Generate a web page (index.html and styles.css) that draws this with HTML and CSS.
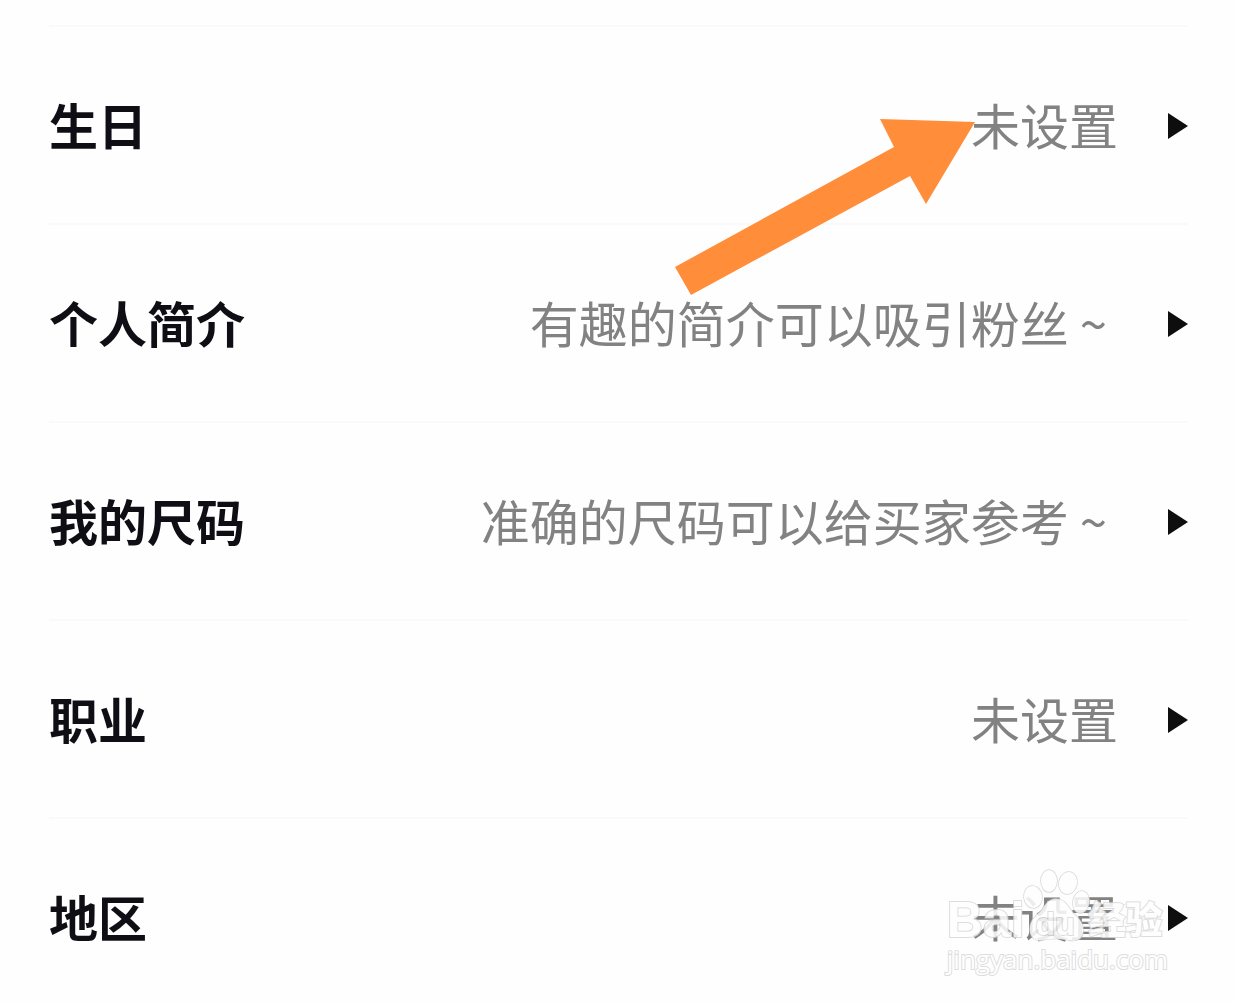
FILE: index.html
```html
<!DOCTYPE html>
<html lang="zh-CN">
<head>
  <meta charset="UTF-8">
  <meta name="viewport" content="width=device-width, initial-scale=1">
  <title>个人资料</title>
  <link rel="stylesheet" href="styles.css">
</head>
<body>
  <main class="page">
    <ul class="settings">
      <li><a class="row" href="#birthday">
        <span class="label">生日</span>
        <span class="value">未设置</span>
        <span class="caret"></span>
      </a></li>
      <li><a class="row" href="#intro">
        <span class="label">个人简介</span>
        <span class="value">有趣的简介可以吸引粉丝&nbsp;~&nbsp;</span>
        <span class="caret"></span>
      </a></li>
      <li><a class="row" href="#size">
        <span class="label">我的尺码</span>
        <span class="value">准确的尺码可以给买家参考&nbsp;~&nbsp;</span>
        <span class="caret"></span>
      </a></li>
      <li><a class="row" href="#job">
        <span class="label">职业</span>
        <span class="value">未设置</span>
        <span class="caret"></span>
      </a></li>
      <li><a class="row" href="#region">
        <span class="label">地区</span>
        <span class="value">未设置</span>
        <span class="caret"></span>
      </a></li>
    </ul>

    <svg class="pointer" viewBox="0 0 300 177" aria-hidden="true">
      <path d="M0 148 L219 28 L205 0 L300 3 L251 85 L235 57 L16 176 Z" fill="#ff8d3a"/>
    </svg>

    <div class="watermark">
      <div class="brand">
        <span class="latin">Bai</span>
        <div class="paw">
          <svg viewBox="0 0 64 76" aria-hidden="true">
            <g fill="#fff" stroke="#d0d0d0" stroke-width="1.5">
              <ellipse cx="8" cy="29" rx="9" ry="11" transform="rotate(-8 8 29)"/>
              <ellipse cx="24" cy="13" rx="8" ry="11"/>
              <ellipse cx="43" cy="15" rx="9" ry="11" transform="rotate(12 43 15)"/>
              <ellipse cx="56" cy="34" rx="8" ry="11" transform="rotate(10 56 34)"/>
              <path d="M31 31 C24 31 21 36 17 42 C12 48 5 51 5 61 C5 69 10 73 17 72 C26 70 35 70 44 72 C53 74 59 70 58 60 C57 51 49 48 45 41 C41 35 38 31 31 31 Z"/>
            </g>
          </svg>
          <span class="du">du</span>
        </div>
        <span class="hanzi">经验</span>
      </div>
      <div class="site">jingyan.baidu.com</div>
    </div>
  </main>
</body>
</html>
```
FILE: styles.css
```css
* { box-sizing: border-box; }

body {
  margin: 0;
  background: #fefefe;
  color: #0e0e14;
  font-family: "Noto Sans CJK SC", sans-serif;
}

.page {
  position: relative;
  padding: 25px 47px 0 49px;
}

.settings {
  list-style: none;
  margin: 0;
  padding: 0;
}

.row {
  display: flex;
  align-items: center;
  padding: 61px 0 59px;
  border-top: 2px solid #f9f9f9;
  font-size: 49px;
  line-height: 72px;
  color: inherit;
  text-decoration: none;
}

.label,
.value {
  padding-bottom: 4px;
}

.label {
  font-weight: bold;
}

.value {
  margin-left: auto;
  color: #828282;
}

.caret {
  margin-left: 50px;
  border-left: 20px solid #0e0e0e;
  border-top: 13px solid transparent;
  border-bottom: 13px solid transparent;
}

/* arrow drawn over the first row */
.pointer {
  position: absolute;
  top: 119px;
  right: 260px;
  width: 300px;
}

.watermark {
  position: absolute;
  top: 868px;
  right: 67px;
  color: #fff;
  opacity: 0.85;
  -webkit-text-stroke: 2px #d8d8d8;
  paint-order: stroke fill;
}

.brand {
  display: flex;
  align-items: flex-end;
  height: 76px;
}

.latin {
  font: bold 50px/48px "Liberation Sans", sans-serif;
}

.paw {
  position: relative;
  width: 64px;
  height: 76px;
}

.paw svg {
  display: block;
  overflow: visible;
}

.du {
  position: absolute;
  left: 11px;
  bottom: 0;
  font: bold 32px/40px "Liberation Sans", sans-serif;
}

.hanzi {
  font-size: 37px;
  font-weight: 900;
  line-height: 52px;
}

.site {
  font: 26px/30px "Open Sans", sans-serif;
}
```
